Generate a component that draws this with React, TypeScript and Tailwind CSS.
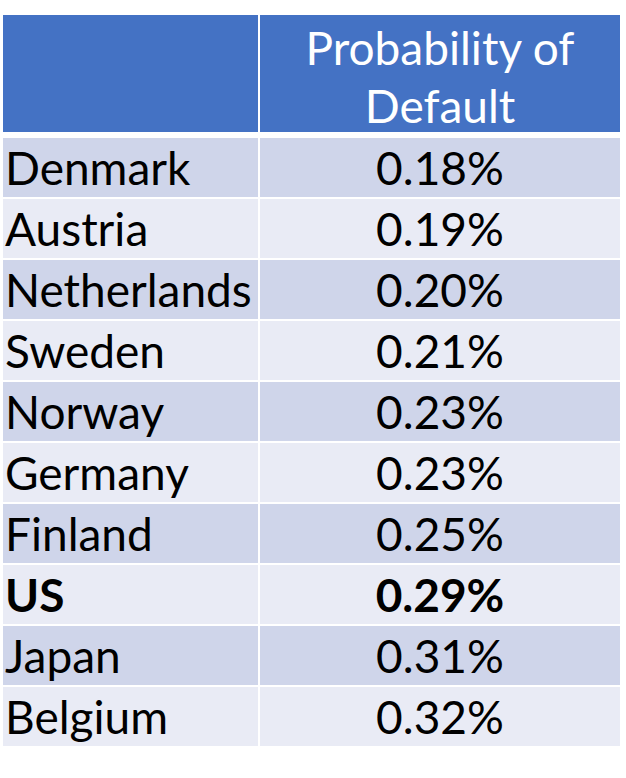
import React from "react";

const rows: { country: string; pd: string; bold?: boolean }[] = [
  { country: "Denmark", pd: "0.18%" },
  { country: "Austria", pd: "0.19%" },
  { country: "Netherlands", pd: "0.20%" },
  { country: "Sweden", pd: "0.21%" },
  { country: "Norway", pd: "0.23%" },
  { country: "Germany", pd: "0.23%" },
  { country: "Finland", pd: "0.25%" },
  { country: "US", pd: "0.29%", bold: true },
  { country: "Japan", pd: "0.31%" },
  { country: "Belgium", pd: "0.32%" },
];

export default function App() {
  return (
    <div
      className="w-[626px] h-[778px] bg-white pl-[3px] pt-[15px]"
      style={{ fontFamily: "Lato, 'Open Sans', sans-serif" }}
    >
      <div className="w-[617px] flex flex-col">
        <div className="grid grid-cols-[255px_360px] gap-x-[2px] mb-[6px]">
          <div className="h-[117px] bg-[#4472c4]" />
          <div className="h-[117px] bg-[#4472c4] text-white text-[46px] leading-[58px] text-center pt-[4px]">
            Probability of
            <br />
            Default
          </div>
        </div>
        <div className="grid grid-cols-[255px_360px] gap-x-[2px] gap-y-[2px]">
          {rows.map((r, i) => {
            const bg = i % 2 === 0 ? "bg-[#cfd5ea]" : "bg-[#e9ebf5]";
            const weight = r.bold ? "font-bold" : "font-normal";
            return (
              <React.Fragment key={r.country}>
                <div
                  className={`${bg} ${weight} h-[59px] flex items-center pl-[2px] text-[46px] leading-none text-black`}
                >
                  {r.country}
                </div>
                <div
                  className={`${bg} ${weight} h-[59px] flex items-center justify-center text-[46px] leading-none text-black`}
                >
                  {r.pd}
                </div>
              </React.Fragment>
            );
          })}
        </div>
      </div>
    </div>
  );
}
